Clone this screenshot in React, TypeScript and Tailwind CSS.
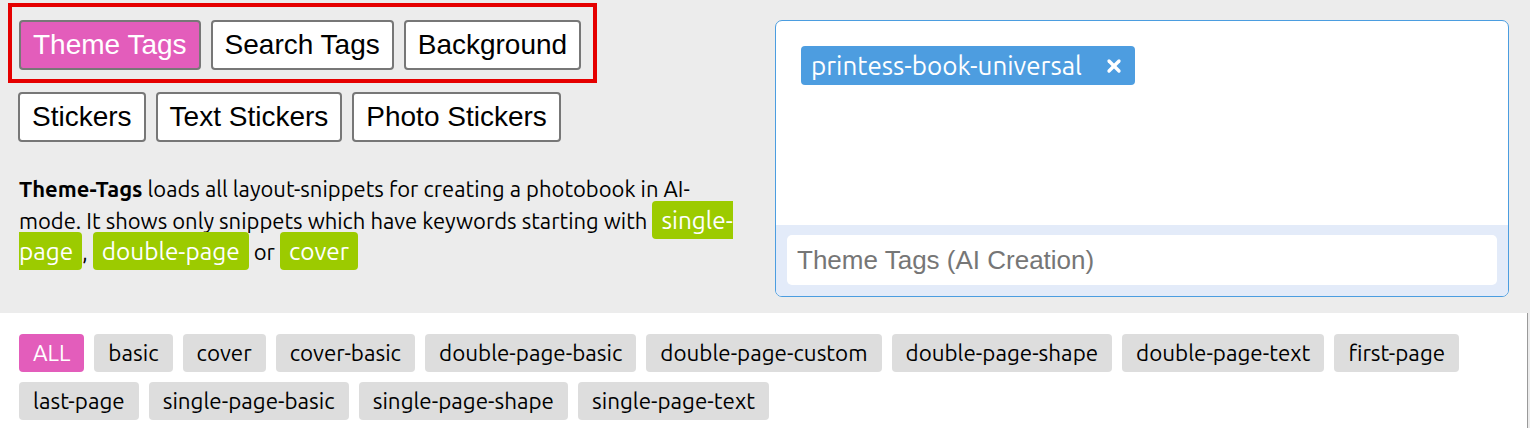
import { X } from "lucide-react";

const topTabs = ["Theme Tags", "Search Tags", "Background"];
const stickerTabs = ["Stickers", "Text Stickers", "Photo Stickers"];

const filterTags = [
  "ALL",
  "basic",
  "cover",
  "cover-basic",
  "double-page-basic",
  "double-page-custom",
  "double-page-shape",
  "double-page-text",
  "first-page",
  "last-page",
  "single-page-basic",
  "single-page-shape",
  "single-page-text",
];

const ubuntu = "font-['Ubuntu','Lato','Noto_Sans',sans-serif]";
const arial = "font-['Liberation_Sans',Arial,sans-serif]";

function TabButton({ label, active }: { label: string; active?: boolean }) {
  return (
    <button
      className={`h-[50px] px-[12px] rounded-[4px] border-2 border-[#777] text-[28px] leading-none ${arial} ${
        active ? "bg-[#e35dbb] text-white" : "bg-white text-black"
      }`}
    >
      {label}
    </button>
  );
}

function Keyword({ children }: { children: string }) {
  return (
    <span className="bg-[#9ccb00] text-white text-[24.4px] rounded-[4px] px-[9px] py-[5px]">
      {children}
    </span>
  );
}

export default function App() {
  return (
    <div className="w-[1530px] h-[428px] bg-[#ececec] overflow-hidden">
      {/* Top section */}
      <div className="flex h-[313px]">
        <div className="w-[767px] shrink-0 pl-[8px] pt-[3px]">
          <div className="inline-flex gap-[10px] border-4 border-[#e50000] pl-[7px] pr-[12px] pt-[13px] pb-[9px]">
            {topTabs.map((t, i) => (
              <TabButton key={t} label={t} active={i === 0} />
            ))}
          </div>
          <div className="flex gap-[10px] pl-[10px] pt-[9px]">
            {stickerTabs.map((t) => (
              <TabButton key={t} label={t} />
            ))}
          </div>
          <p className={`pl-[11px] pr-[18px] mt-[31px] text-[22px] leading-[31.5px] text-black ${ubuntu}`}>
            <b>Theme-Tags</b> loads all layout-snippets for creating a photobook in AI-mode. It shows only
            snippets which have keywords starting with <Keyword>single-page</Keyword>,{" "}
            <Keyword>double-page</Keyword> or <Keyword>cover</Keyword>
          </p>
        </div>

        <div className="flex-1 pt-[20px] pr-[21px] pb-[16px] pl-[8px]">
          <div className="h-full flex flex-col bg-white border border-[#4b9de0] rounded-[7px] overflow-hidden">
            <div className="flex-1 px-[25px] pt-[25px]">
              <span
                className={`inline-flex items-center gap-[22px] h-[39px] pl-[10px] pr-[11px] rounded-[4px] bg-[#4d9de0] text-white text-[26px] ${ubuntu}`}
              >
                printess-book-universal
                <X size={20} strokeWidth={4} />
              </span>
            </div>
            <div className="bg-[#e3ebf9] px-[11px] pt-[10px] pb-[11px]">
              <input
                placeholder="Theme Tags (AI Creation)"
                className={`w-full h-[50px] rounded-[5px] bg-white px-[10px] text-[26px] outline-none placeholder:text-[#767676] ${arial}`}
              />
            </div>
          </div>
        </div>
      </div>

      {/* Tag filter */}
      <div className="w-[1528px] h-[115px] bg-white border-r border-[#9a9a9a] pl-[19px] pr-[40px] pt-[21px]">
        <div className="flex flex-wrap gap-x-[10px] gap-y-[10px]">
          {filterTags.map((t, i) => (
            <span
              key={t}
              className={`h-[38px] flex items-center px-[14px] rounded-[4px] text-[22.4px] ${ubuntu} ${
                i === 0 ? "bg-[#e35dbb] text-white" : "bg-[#dddddd] text-black"
              }`}
            >
              {t}
            </span>
          ))}
        </div>
      </div>
    </div>
  );
}
